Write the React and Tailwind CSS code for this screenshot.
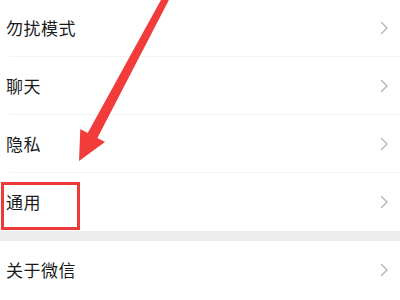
import React from "react";

const rows = ["勿扰模式", "聊天", "隐私", "通用"];

function Chevron() {
  return (
    <svg width="10" height="14" viewBox="0 0 10 14" className="shrink-0">
      <path d="M2.5 1.5 L8 7 L2.5 12.5" fill="none" stroke="#b4b4b4" strokeWidth="1.4" strokeLinecap="round" strokeLinejoin="round" />
    </svg>
  );
}

function Row({ label, last }) {
  return (
    <div className="h-[58px] flex items-center justify-between pl-[6px] pr-[11px] relative">
      <span className="text-[17px] text-[#1b1b1b] tracking-[0.5px]">{label}</span>
      <Chevron />
      {!last && <div className="absolute bottom-0 left-[10px] right-0 h-px bg-[#f4f4f4]" />}
    </div>
  );
}

export default function App() {
  return (
    <div
      className="relative w-[400px] h-[300px] overflow-hidden bg-white"
      style={{ fontFamily: '"Noto Sans CJK SC", "Noto Sans", sans-serif' }}
    >
      <div className="-mt-px">
        {rows.map((r, i) => (
          <Row key={r} label={r} last={i === rows.length - 1} />
        ))}
        <div className="h-[10px] bg-[#ededed]" />
        <Row label="关于微信" last />
      </div>

      {/* highlight box */}
      <div className="absolute left-[1px] top-[182px] w-[79px] h-[48px] border-[3px] border-[#ef3a3a]" />

      {/* arrow */}
      <svg className="absolute left-0 top-0" width="400" height="300" viewBox="0 0 400 300">
        <polygon
          points="162.9,-3.6 169.1,-0.4 97.4,138.1 105,142 79,161 80.3,128.9 87.7,132.9"
          fill="#f23b3b"
        />
      </svg>
    </div>
  );
}
